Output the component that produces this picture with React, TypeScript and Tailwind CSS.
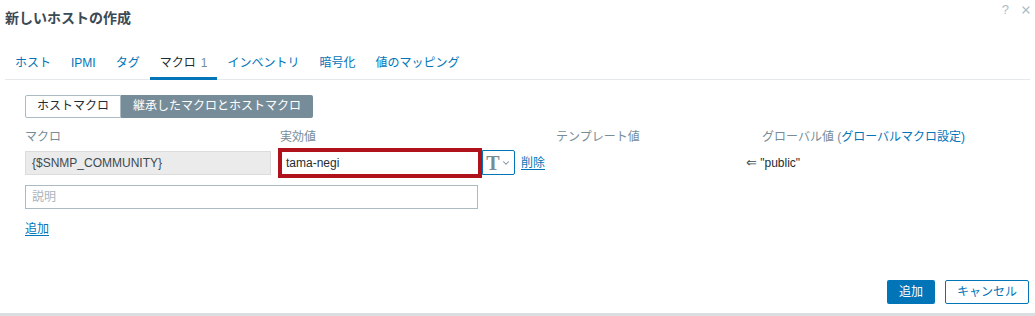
import { ChevronDown, X } from "lucide-react";

const tabs = [
  { label: "ホスト" },
  { label: "IPMI" },
  { label: "タグ" },
  { label: "マクロ", count: 1, active: true },
  { label: "インベントリ" },
  { label: "暗号化" },
  { label: "値のマッピング" },
];

function Tabs() {
  return (
    <ul className="mt-[21px] mx-[5px] flex border-b border-[#e6e9eb]">
      {tabs.map((tab) => (
        <li
          key={tab.label}
          className={`-mb-px px-[10px] pb-[6px] leading-[16px] border-b-[3px] ${
            tab.active
              ? "border-[#0275b8] text-[#1f2c33]"
              : "border-transparent text-[#0275b8]"
          }`}
        >
          {tab.label}
          {tab.count && <span className="ml-[5px] text-[#768d99]">{tab.count}</span>}
        </li>
      ))}
    </ul>
  );
}

export default function App() {
  return (
    <div className="w-[1035px] h-[316px] bg-white flex flex-col border-b-[3px] border-[#dcdfe1] font-['Liberation_Sans','Noto_Sans_CJK_JP',sans-serif] text-[12px] text-[#1f2c33]">
      {/* Header */}
      <header className="relative h-[34px] px-[5px] pt-[9px]">
        <h1 className="text-[14px] font-bold leading-[18px] text-[#3b4a55]">
          新しいホストの作成
        </h1>
        <div className="absolute top-[3px] right-[3px] flex items-center gap-[11px] text-[#acbbc2]">
          <span className="text-[13px] leading-[14px]">?</span>
          <X className="w-[12px] h-[12px]" strokeWidth={2.5} />
        </div>
      </header>

      <Tabs />

      {/* Body */}
      <div className="pl-[25px] flex flex-col">
        <div className="mt-[15px] flex h-[23px] w-fit">
          <button className="px-[11px] border border-[#acbbc2] rounded-l-[2px] bg-white text-[#1f2c33] leading-[21px]">
            ホストマクロ
          </button>
          <button className="px-[12px] bg-[#768d99] rounded-r-[2px] text-white leading-[23px]">
            継承したマクロとホストマクロ
          </button>
        </div>

        {/* Column labels */}
        <div className="mt-[11px] flex leading-[16px] text-[#768d99]">
          <span className="w-[255px]">マクロ</span>
          <span className="w-[276px]">実効値</span>
          <span className="w-[206px]">テンプレート値</span>
          <span>
            グローバル値 (
            <span className="text-[#0275b8]">グローバルマクロ設定)</span>
          </span>
        </div>

        {/* Macro row */}
        <div className="mt-[3px] flex items-center h-[29px]">
          <div className="w-[246px] h-[24px] bg-[#ebebeb] border border-[#dcdcdc] px-[6px] leading-[22px] text-[#3c4a52]">
            {"{$SNMP_COMMUNITY}"}
          </div>
          <div className="ml-[7px] w-[204px] h-[30px] border-[4px] border-[#b0121b] bg-white px-[4px] leading-[22px]">
            tama-negi
          </div>
          <button className="w-[33px] h-[25px] border border-[#0275b8] rounded-r-[2px] flex items-center justify-center gap-[1px] text-[#768d99]">
            <span className="font-['Liberation_Serif',serif] font-bold text-[20px] leading-[20px]">T</span>
            <ChevronDown className="w-[10px] h-[10px]" strokeWidth={2.5} />
          </button>
          <a className="ml-[6px] text-[#0275b8] underline underline-offset-2">削除</a>
          <span className="ml-[201px] text-[#1f2c33]">
            <span className="font-['DejaVu_Sans',sans-serif] text-[13px] text-[#3c4a52]">⇐</span> "public"
          </span>
        </div>

        <div className="mt-[8px] w-[453px] h-[24px] border border-[#acbbc2] px-[6px] leading-[22px] text-[#a9b4ba]">
          説明
        </div>

        <a className="mt-[12px] w-fit leading-[16px] text-[#0275b8] underline underline-offset-2">
          追加
        </a>
      </div>

      {/* Footer */}
      <div className="mt-auto pb-[9px] pr-[6px] flex justify-end gap-[10px]">
        <button className="h-[24px] px-[12px] rounded-[2px] bg-[#0275b8] text-white leading-[24px]">
          追加
        </button>
        <button className="h-[24px] px-[11px] rounded-[2px] border border-[#0275b8] bg-white text-[#0275b8] leading-[22px]">
          キャンセル
        </button>
      </div>
    </div>
  );
}
